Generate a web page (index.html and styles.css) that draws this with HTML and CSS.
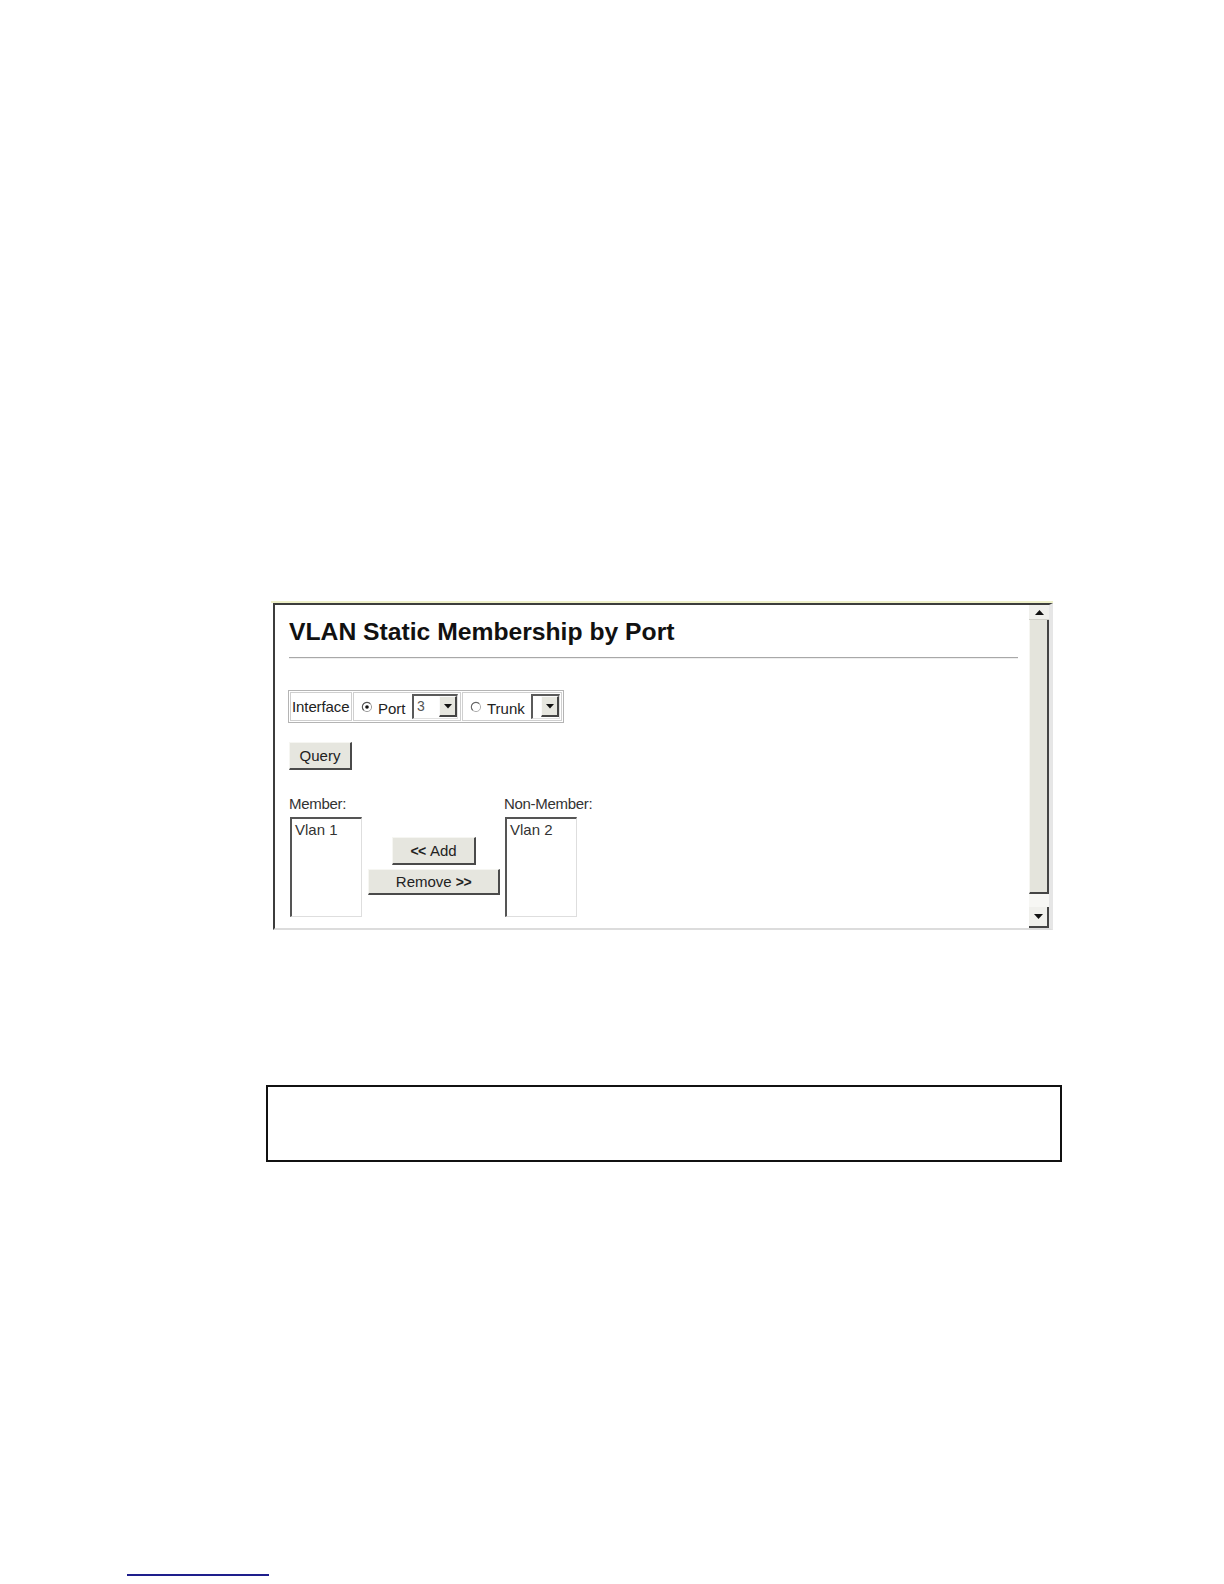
FILE: index.html
```html
<!DOCTYPE html>
<html>
<head>
<meta charset="utf-8">
<link rel="stylesheet" href="styles.css">
</head>
<body>
<div class="page">
  <div class="shot">
    <div class="view">
      <div class="content">
        <h1 class="title">VLAN Static Membership by Port</h1>
        <div class="rule"></div>
        <div class="iface">
          <div class="cell cell-label">Interface</div>
          <div class="cell cell-port">
            <svg class="radio" width="12" height="12" viewBox="0 0 12 12"><circle cx="6" cy="6" r="4.6" fill="#fff" stroke="#a0a0a0" stroke-width="1"/><path d="M2.7 9.3 A4.6 4.6 0 0 1 9.3 2.7" fill="none" stroke="#555" stroke-width="1.1"/><circle cx="6" cy="6" r="1.8" fill="#111"/></svg>
            <span class="opt">Port</span>
            <div class="select sel-port"><span class="val">3</span><span class="drop"><svg width="8" height="5" viewBox="0 0 8 5"><polygon points="0,0 8,0 4,4.5" fill="#111"/></svg></span></div>
          </div>
          <div class="cell cell-trunk">
            <svg class="radio" width="12" height="12" viewBox="0 0 12 12"><circle cx="6" cy="6" r="4.6" fill="#fff" stroke="#b0b0b0" stroke-width="1"/><path d="M2.7 9.3 A4.6 4.6 0 0 1 9.3 2.7" fill="none" stroke="#666" stroke-width="1.1"/></svg>
            <span class="opt">Trunk</span>
            <div class="select sel-trunk"><span class="val"></span><span class="drop"><svg width="8" height="5" viewBox="0 0 8 5"><polygon points="0,0 8,0 4,4.5" fill="#111"/></svg></span></div>
          </div>
        </div>
        <div class="btn query">Query</div>
        <div class="members">
          <div class="col col-member">
            <div class="label">Member:</div>
            <div class="list">Vlan 1</div>
          </div>
          <div class="actions">
            <div class="btn add"><span class="chev">&lt;&lt;</span>&nbsp;Add</div>
            <div class="btn remove">Remove&nbsp;<span class="chev">&gt;&gt;</span></div>
          </div>
          <div class="col col-non">
            <div class="label">Non-Member:</div>
            <div class="list">Vlan 2</div>
          </div>
        </div>
      </div>
      <div class="scrollbar">
        <div class="sb-btn sb-up"><svg width="9" height="5" viewBox="0 0 9 5"><polygon points="0,5 9,5 4.5,0" fill="#111"/></svg></div>
        <div class="sb-thumb"></div>
        <div class="sb-track"></div>
        <div class="sb-btn sb-down"><svg width="9" height="5" viewBox="0 0 9 5"><polygon points="0,0 9,0 4.5,5" fill="#111"/></svg></div>
      </div>
    </div>
  </div>
  <div class="note"></div>
  <div class="footer-rule"></div>
</div>
</body>
</html>
```

FILE: styles.css
```css
html, body {
  margin: 0;
  padding: 0;
  background: #ffffff;
}

.page {
  padding-top: 601px;
  height: 1584px;
  box-sizing: border-box;
  font-family: "Liberation Sans", Arial, sans-serif;
  color: #222;
  overflow: hidden;
}

.shot {
  margin-left: 271px;
  width: 782px;
  border-top: 2px solid #eef0c8;
  padding-left: 2px;
  box-sizing: border-box;
}

.view {
  display: flex;
  height: 327px;
  border-top: 2px solid #3c3c3c;
  border-left: 2px solid #3c3c3c;
  border-bottom: 2px solid #dcdcdc;
  border-right: 4px solid #e6e6e6;
  box-sizing: border-box;
  background: #fff;
}

.content {
  flex: 1;
  padding: 13px 11px 0 14px;
  min-width: 0;
}

.title {
  margin: 0;
  font-size: 24.7px;
  line-height: 28px;
  font-weight: bold;
  color: #111;
}

.rule {
  margin-top: 11px;
  height: 1px;
  background: #a8a8a8;
  border-bottom: 1px solid #efefef;
}

.iface {
  margin-top: 31px;
  display: flex;
  width: 276px;
  height: 33px;
  margin-left: -1px;
  border: 1px solid #b4b4b4;
  box-sizing: border-box;
  padding: 1px;
  gap: 1px;
  font-size: 15px;
}

.cell {
  display: flex;
  align-items: center;
  border: 1px solid #cfcfcf;
  box-sizing: border-box;
  height: 29px;
}

.cell-label {
  width: 62px;
  padding-left: 1px;
  letter-spacing: -0.1px;
}

.cell-port {
  width: 108px;
  padding-left: 7px;
}

.cell-trunk {
  width: 100px;
  padding-left: 7px;
}

.radio {
  flex: none;
  margin-top: 1px;
}

.opt {
  margin-left: 5px;
  margin-top: 3px;
}

.cell-port .opt {
  width: 34px;
}

.cell-trunk .opt {
  width: 44px;
}

.select {
  display: flex;
  height: 25px;
  box-sizing: border-box;
  border-top: 2px solid #5a5a5a;
  border-left: 2px solid #5a5a5a;
  border-right: 1px solid #e0e0e0;
  border-bottom: 1px solid #e0e0e0;
  background: #fff;
}

.sel-port {
  width: 46px;
}

.sel-trunk {
  width: 29px;
}

.val {
  flex: 1;
  padding-left: 3px;
  font-size: 14px;
  line-height: 20px;
  color: #555;
}

.drop {
  width: 18px;
  height: 21px;
  box-sizing: border-box;
  background: #e6e6df;
  border-left: 1px solid #fafafa;
  border-top: 1px solid #fafafa;
  border-right: 2px solid #444;
  border-bottom: 2px solid #444;
  display: flex;
  align-items: center;
  justify-content: center;
}

.btn {
  display: flex;
  align-items: center;
  justify-content: center;
  box-sizing: border-box;
  background: #e6e6df;
  border-top: 1px solid #f6f6f2;
  border-left: 1px solid #f6f6f2;
  border-right: 2px solid #4a4a4a;
  border-bottom: 2px solid #4a4a4a;
  font-size: 15px;
  color: #222;
}

.chev {
  font-weight: bold;
  font-size: 14px;
  letter-spacing: -0.5px;
}

.query {
  margin-top: 19px;
  width: 63px;
  height: 28px;
}

.members {
  display: flex;
  margin-top: 25px;
}

.col-member {
  width: 73px;
}

.col-non {
  width: 92px;
}

.label {
  font-size: 15px;
  line-height: 18px;
  letter-spacing: -0.3px;
  color: #333;
}

.list {
  margin-top: 4px;
  margin-left: 1px;
  width: 72px;
  height: 100px;
  box-sizing: border-box;
  border-top: 2px solid #555;
  border-left: 2px solid #555;
  border-right: 1px solid #dedede;
  border-bottom: 1px solid #dedede;
  padding: 2px 0 0 3px;
  font-size: 15px;
  line-height: 17px;
  color: #333;
}

.actions {
  width: 132px;
  margin-left: 6px;
  margin-right: 4px;
  padding-top: 42px;
  display: flex;
  flex-direction: column;
  align-items: center;
  gap: 4px;
}

.add {
  width: 84px;
  height: 28px;
}

.remove {
  width: 132px;
  height: 26px;
}

.scrollbar {
  width: 20px;
  display: flex;
  flex-direction: column;
  flex: none;
}

.sb-btn {
  height: 15px;
  display: flex;
  align-items: center;
  justify-content: center;
  background: #f0f0ec;
  box-sizing: border-box;
}

.sb-up {
  border-bottom: 1px solid #cfcfc8;
}

.sb-down {
  height: 21px;
  border-right: 2px solid #444;
  border-bottom: 2px solid #444;
  background: #f0f0ec;
}

.sb-thumb {
  height: 274px;
  box-sizing: border-box;
  background: #e4e4dc;
  border-left: 1px solid #f6f6f2;
  border-right: 2px solid #444;
  border-bottom: 2px solid #444;
}

.sb-track {
  flex: 1;
  background: #f7f7f4;
}

.note {
  margin-top: 155px;
  margin-left: 266px;
  width: 796px;
  height: 77px;
  box-sizing: border-box;
  border: 2px solid #111;
}

.footer-rule {
  margin-top: 412px;
  margin-left: 127px;
  width: 142px;
  height: 2px;
  background: #1e1e8c;
}
```
